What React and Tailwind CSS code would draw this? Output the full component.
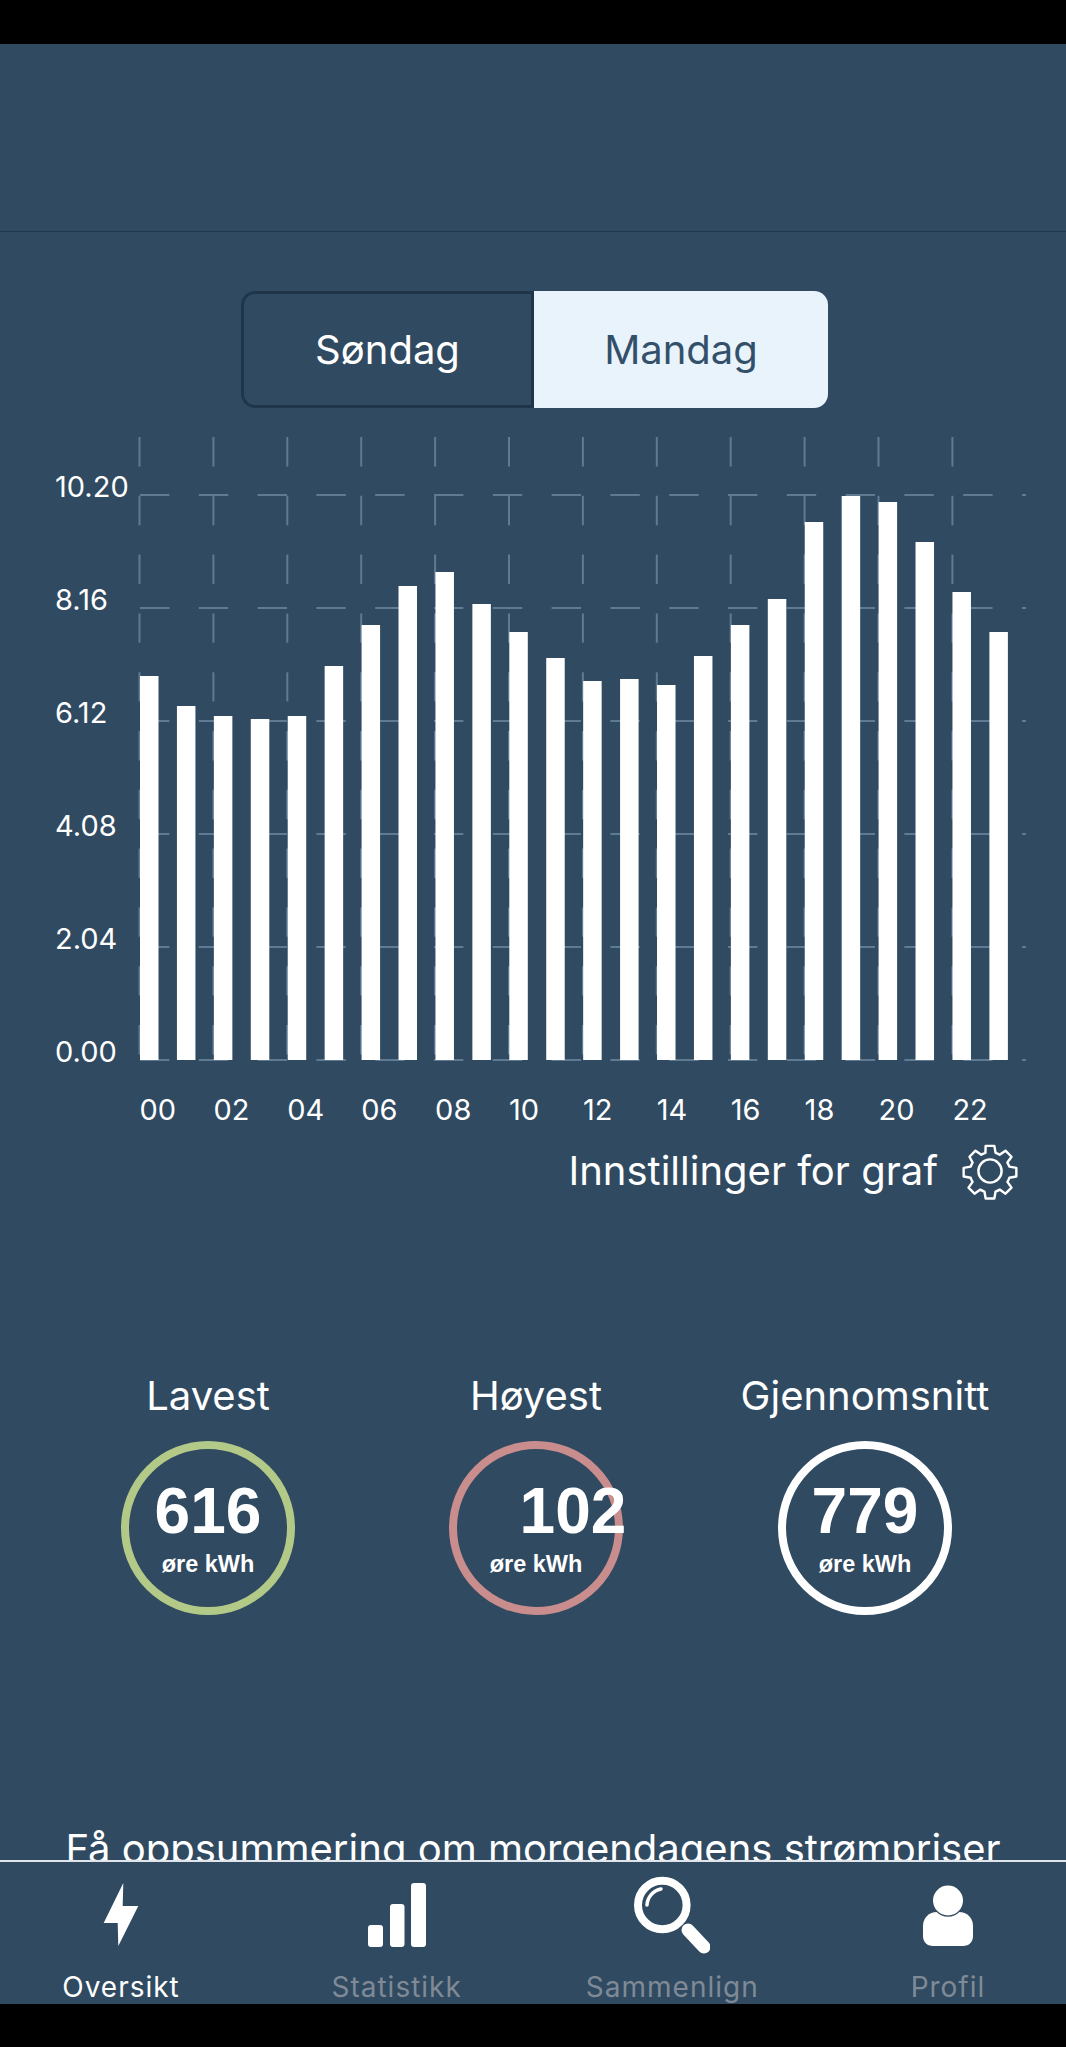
import React from 'react';

const barTops = [
    677, 707, 717, 720, 717, 667, 626, 587, 573, 605, 633, 659,
    682, 680, 686, 657, 626, 600, 523, 497, 503, 543, 593, 633,
];
const yLabels = ['10.20', '8.16', '6.12', '4.08', '2.04', '0.00'];
const xLabels = ['00', '02', '04', '06', '08', '10', '12', '14', '16', '18', '20', '22'];

// the chart is one drawing; svg coordinates start at the top of the plot area
const TOP = 430;
const AXIS = 1061;

function PriceChart() {
    return (
        <svg width="1066" height="700" className="block font-['Inter',sans-serif]">
            {xLabels.map((_, i) => {
                const x = 139.5 + i * 73.9;
                return (
                    <line
                        key={i}
                        x1={x}
                        x2={x}
                        y1={438 - TOP}
                        y2={AXIS - TOP}
                        stroke="#5f7a93"
                        strokeWidth="2"
                        strokeDasharray="29.4 29.4"
                    />
                );
            })}
            {yLabels.map((label, i) => {
                const y = 496 + i * 113 - TOP;
                return (
                    <g key={label}>
                        <line x1="140" x2="1026" y1={y} y2={y} stroke="#5f7a93" strokeWidth="2" strokeDasharray="29.4 29.4" />
                        <text x="55" y={y + 1.5} fontSize="29" fill="#fff">
                            {label}
                        </text>
                    </g>
                );
            })}
            {barTops.map((top, i) => (
                <rect key={i} x={140 + i * 36.93} y={top - TOP} width="18.5" height={AXIS - top} fill="#fff" />
            ))}
            {xLabels.map((label, i) => (
                <text key={label} x={139.5 + i * 73.9} y={1121 - TOP} fontSize="29" fill="#fff">
                    {label}
                </text>
            ))}
        </svg>
    );
}

function GearIcon() {
    return (
        <svg width="58" height="58" viewBox="0 0 24 24" fill="none" stroke="#fff" strokeWidth="1" strokeLinejoin="round">
            <path d="M10.2 1.6h3.6l.5 2.9c.6.2 1.2.5 1.7.8l2.4-1.7 2.5 2.5-1.7 2.4c.3.5.6 1.1.8 1.7l2.9.5v3.6l-2.9.5c-.2.6-.5 1.2-.8 1.7l1.7 2.4-2.5 2.5-2.4-1.7c-.5.3-1.1.6-1.7.8l-.5 2.9h-3.6l-.5-2.9c-.6-.2-1.2-.5-1.7-.8l-2.4 1.7-2.5-2.5 1.7-2.4c-.3-.5-.6-1.1-.8-1.7l-2.9-.5v-3.6l2.9-.5c.2-.6.5-1.2.8-1.7L3.5 6.1 6 3.6l2.4 1.7c.5-.3 1.1-.6 1.7-.8z" />
            <circle cx="12" cy="12" r="4.8" />
        </svg>
    );
}

function StatCircle({ label, value, ringClass, valueClass }) {
    return (
        <div className="flex w-[174px] flex-col items-center">
            <div className="whitespace-nowrap text-[40px] leading-[48px] text-white">{label}</div>
            <div className={`mt-[21px] flex h-[174px] w-[174px] flex-col items-center rounded-full border-[8px] ${ringClass}`}>
                <div className={`mt-[29px] font-['Liberation_Sans',Arial,sans-serif] text-[64px] font-bold leading-[66px] text-white ${valueClass || ''}`}>
                    {value}
                </div>
                <div className="mt-[6px] whitespace-nowrap font-['Liberation_Sans',Arial,sans-serif] text-[23.5px] font-bold leading-[28px] text-white">
                    øre kWh
                </div>
            </div>
        </div>
    );
}

function BoltIcon() {
    return (
        <svg width="36" height="64" viewBox="0 0 36 64" fill="#fff" className="mb-[7px]">
            <path d="M20.3 0 L0.7 40 L14.7 40 L15.3 63 L35.3 23 L19.7 23 Z" />
        </svg>
    );
}

function BarsIcon() {
    return (
        <svg width="58" height="64" viewBox="0 0 58 64" fill="#fff" className="mb-[7px]">
            <rect x="0" y="42" width="15" height="22" rx="3" />
            <rect x="22" y="21" width="14.5" height="43" rx="3" />
            <rect x="43" y="0" width="15" height="64" rx="3" />
        </svg>
    );
}

function SearchIcon() {
    return (
        <svg width="76" height="78" viewBox="0 0 76 78" fill="none" stroke="#fff">
            <circle cx="28.3" cy="29" r="24.3" strokeWidth="8" />
            <path d="M13 29 C13.5 21 19 14.5 27 13" strokeWidth="3.5" strokeLinecap="round" />
            <path d="M54 54 L70 71" strokeWidth="13" strokeLinecap="round" />
        </svg>
    );
}

function PersonIcon() {
    return (
        <svg width="50" height="62" viewBox="0 0 50 62" fill="#fff" className="mb-[7px]">
            <path d="M14 27 L36 27 C44 27 50 33 50 41 L50 51 C50 57 46 61 40 61 L10 61 C4 61 0 57 0 51 L0 41 C0 33 6 27 14 27 Z" />
            <circle cx="25" cy="15.5" r="16.2" fill="#304a61" stroke="none" />
            <circle cx="25" cy="15.5" r="15" />
        </svg>
    );
}

function TabItem({ icon, label, active }) {
    return (
        <div className="flex w-[200px] flex-col items-center">
            <div className="flex h-[78px] shrink-0 items-end justify-center">{icon}</div>
            <div className={`mt-[16px] text-[28px] leading-[34px] tracking-[1px] ${active ? 'text-white' : 'text-[#7f8a96]'}`}>
                {label}
            </div>
        </div>
    );
}

export default function App() {
    return (
        <div className="flex h-[2047px] w-[1066px] flex-col overflow-hidden bg-black font-['Inter',sans-serif]">
            <div className="h-[44px] shrink-0 bg-black" />
            <div className="flex h-[1816px] shrink-0 flex-col overflow-hidden bg-[#304a61]">
                <div className="h-[188px] shrink-0 border-b border-[#20364b]" />

                <div className="mt-[59px] flex justify-center pl-[3px]">
                    <div className="flex h-[117px] w-[587px] overflow-hidden rounded-[14px] text-[40px]">
                        <div className="flex w-[293px] items-center justify-center rounded-l-[14px] border-[3px] border-[#1f3549] text-white">
                            Søndag
                        </div>
                        <div className="flex flex-1 items-center justify-center bg-[#e9f3fc] text-[#33506b]">Mandag</div>
                    </div>
                </div>

                <div className="mt-[21px] shrink-0">
                    <PriceChart />
                </div>

                <div className="mt-[13px] flex shrink-0 items-center justify-end pr-[47px]">
                    <span className="text-[40px] leading-[56px] text-white">Innstillinger for graf</span>
                    <span className="ml-[23px]">
                        <GearIcon />
                    </span>
                </div>

                <div className="mt-[172px] flex shrink-0 pl-[121px]">
                    <StatCircle label="Lavest" value="616" ringClass="border-[#b3c988]" />
                    <div className="ml-[154px]">
                        <StatCircle label="Høyest" value="102" ringClass="border-[#c98d8d]" valueClass="translate-x-[37px]" />
                    </div>
                    <div className="ml-[155px]">
                        <StatCircle label="Gjennomsnitt" value="779" ringClass="border-white" />
                    </div>
                </div>

                <div className="mt-[210px] shrink-0 text-center text-[40px] leading-[48px] whitespace-nowrap text-white">
                    Få oppsummering om morgendagens strømpriser
                </div>
            </div>

            <div className="flex h-[144px] shrink-0 justify-between border-t-2 border-[#dfe5ea] bg-[#304a61] pt-[14px] pr-[18px] pl-[21px]">
                <TabItem icon={<BoltIcon />} label="Oversikt" active />
                <TabItem icon={<BarsIcon />} label="Statistikk" />
                <TabItem icon={<SearchIcon />} label="Sammenlign" />
                <TabItem icon={<PersonIcon />} label="Profil" />
            </div>
            <div className="flex-1 bg-black" />
        </div>
    );
}
